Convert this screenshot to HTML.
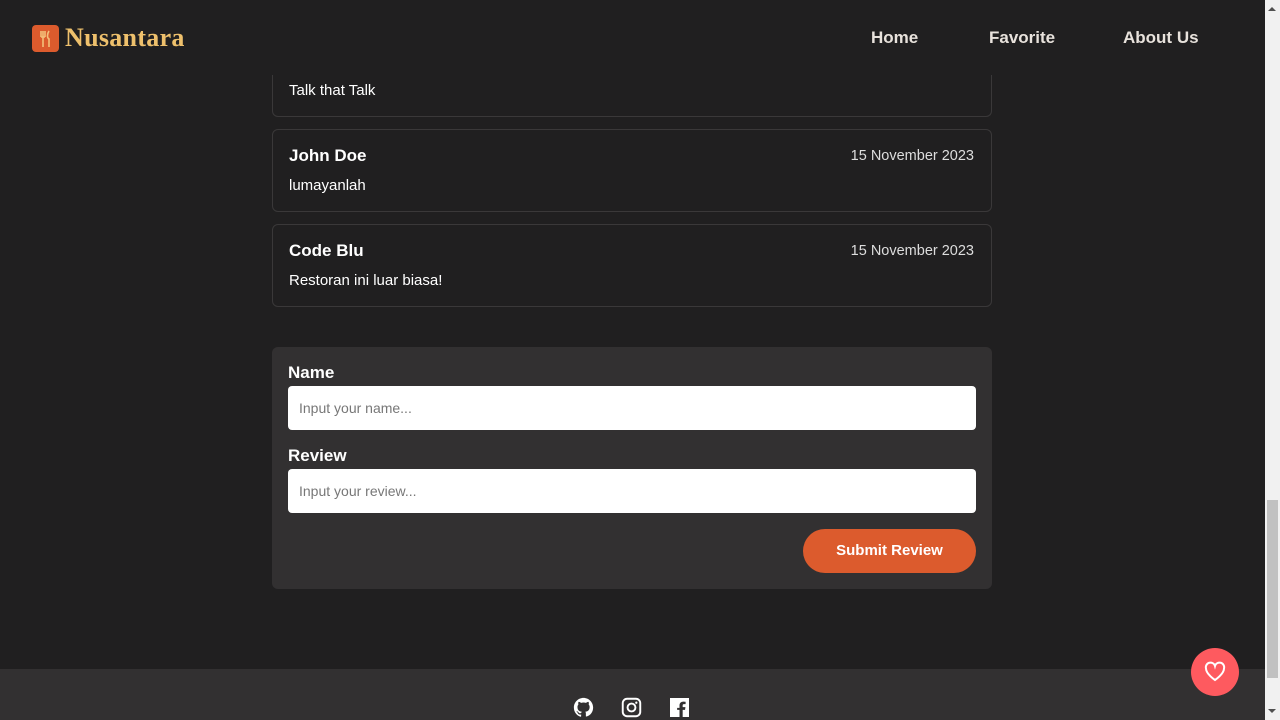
<!DOCTYPE html>
<html style="background:#201f20"><head><style>
*{box-sizing:border-box;margin:0;padding:0}
body{width:1280px;height:720px;overflow:hidden;background:#201f20;font-family:"Liberation Sans",sans-serif;color:#fff;position:relative}
.nav{position:absolute;top:0;left:0;width:1265px;height:75px;background:#201f20;z-index:2}
.logo{position:absolute;left:32px;top:25px;width:27px;height:27px;background:#dc5b2d;border-radius:4px}
.brand{position:absolute;left:65px;top:23px;font-family:"Liberation Serif",serif;font-weight:bold;font-size:26px;letter-spacing:0.3px;color:#eec06c}
.nav a{position:absolute;top:28px;font-weight:bold;font-size:17px;color:#e8e2dc;text-decoration:none}
.card{position:absolute;left:272px;width:720px;border:1px solid #3a3839;border-radius:6px}
.nm{position:absolute;left:16px;top:16px;font-weight:bold;font-size:17px}
.dt{position:absolute;right:17px;top:18px;font-size:14.5px;color:#ddd}
.tx{position:absolute;left:16px;top:47px;font-size:15px}
.form{position:absolute;left:272px;top:347px;width:720px;height:242px;background:#323031;border-radius:6px}
.lbl{position:absolute;left:16px;font-weight:bold;font-size:17px}
.inp{position:absolute;left:16px;width:688px;height:44px;background:#fff;border-radius:4px;color:#777;font-size:14px;padding:14px 11px}
.btn{position:absolute;left:531px;top:182px;width:173px;height:44px;background:#dc5b2d;border-radius:22px;font-weight:bold;font-size:15px;text-align:center;line-height:44px}
.foot{position:absolute;left:0;top:669px;width:1265px;height:51px;background:#323031}
.fab{position:absolute;left:1191px;top:648px;width:48px;height:48px;border-radius:50%;background:#fe5a5f}
.sb{position:absolute;left:1265px;top:0;width:15px;height:720px;background:#f1f1f1;z-index:5}
.th{position:absolute;left:1267px;top:500px;width:11px;height:178px;background:#c1c1c1;z-index:6}
.ar{position:absolute;left:1268px;width:0;height:0;border-left:4px solid transparent;border-right:4px solid transparent;z-index:6}
</style></head><body>
<div class="card" style="top:40px;height:77px;border-top:none"><div class="tx" style="top:42px">Talk that Talk</div></div>
<div class="card" style="top:129px;height:83px"><div class="nm">John Doe</div><div class="dt">15 November 2023</div><div class="tx">lumayanlah</div></div>
<div class="card" style="top:224px;height:83px"><div class="nm">Code Blu</div><div class="dt">15 November 2023</div><div class="tx">Restoran ini luar biasa!</div></div>
<div class="nav">
<div class="logo"><svg width="27" height="27" viewBox="0 0 27 27"><path d="M9 6v6M11 6v6M13 6v6M9 12h4M11 12v10M17 6c-2 3-2 7 0 8v8" stroke="#f3c07a" stroke-width="1.6" fill="none"/></svg></div>
<div class="brand">Nusantara</div>
<a style="left:871px">Home</a><a style="left:989px">Favorite</a><a style="left:1123px">About Us</a>
</div>
<div class="form">
<div class="lbl" style="top:16px">Name</div><div class="inp" style="top:39px">Input your name...</div>
<div class="lbl" style="top:99px">Review</div><div class="inp" style="top:122px">Input your review...</div>
<div class="btn">Submit Review</div>
</div>
<div class="foot">
<svg style="position:absolute;left:573px;top:28px" width="21" height="21" viewBox="0 0 24 24"><path fill="#fff" d="M12 1C6 1 1 6 1 12c0 5 3 9 7.5 10.5.6.1.8-.2.8-.5v-2c-3 .7-3.7-1.4-3.7-1.4-.5-1.3-1.2-1.6-1.2-1.6-1-.7.1-.7.1-.7 1.1.1 1.7 1.1 1.7 1.1 1 1.7 2.6 1.2 3.2.9.1-.7.4-1.200.7-1.5-2.4-.3-5-1.2-5-5.4 0-1.2.4-2.2 1.1-2.9-.1-.3-.5-1.4.1-2.900 0 0 .9-.3 3 1.1a10 10 0 0 1 5.5 0c2.1-1.4 3-1.1 3-1.1.6 1.5.2 2.6.1 2.9.7.8 1.1 1.7 1.1 2.9 0 4.2-2.6 5.1-5 5.4.4.3.7 1 .7 2v3c0 .3.2.6.8.5C20 21 23 17 23 12 23 6 18 1 12 1z"/></svg>
<svg style="position:absolute;left:621px;top:28px" width="21" height="21" viewBox="0 0 24 24"><rect x="2" y="2" width="20" height="20" rx="5" fill="none" stroke="#fff" stroke-width="2.2"/><circle cx="12" cy="12" r="4.5" fill="none" stroke="#fff" stroke-width="2.2"/><circle cx="17.5" cy="6.5" r="1.3" fill="#fff"/></svg>
<svg style="position:absolute;left:670px;top:29px" width="19" height="19" viewBox="0 0 24 24"><path fill="#fff" d="M0 0h24v24H16v-9h3l.5-3.5H16V9.5c0-1 .3-1.7 1.7-1.7h2V4.7c-.4 0-1.5-.2-2.9-.2-2.9 0-4.8 1.7-4.8 5v2.9H9V15h3v9H0z"/></svg>
</div>
<div class="fab"><svg style="position:absolute;left:12px;top:12px" width="24" height="24" viewBox="0 0 24 24"><path d="M12 20S3 14 3 8.5A4.5 4.5 0 0 1 12 6a4.5 4.5 0 0 1 9 2.5C21 14 12 20 12 20z" fill="none" stroke="#fff" stroke-width="2"/></svg></div>
<div class="sb"></div><div class="th"></div>
<div class="ar" style="top:7px;border-bottom:4px solid #505050"></div>
<div class="ar" style="top:709px;border-top:4px solid #505050"></div>
</body></html>
